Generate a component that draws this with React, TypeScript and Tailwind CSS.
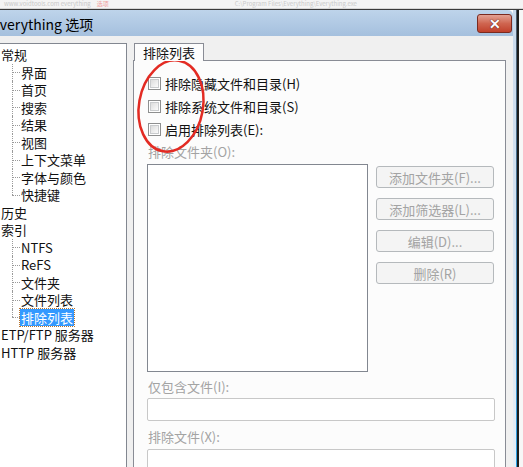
import React from "react";

type TreeItem = { label: string; level: 0 | 1; last?: boolean; selected?: boolean };

const treeItems: TreeItem[] = [
  { label: "常规", level: 0 },
  { label: "界面", level: 1 },
  { label: "首页", level: 1 },
  { label: "搜索", level: 1 },
  { label: "结果", level: 1 },
  { label: "视图", level: 1 },
  { label: "上下文菜单", level: 1 },
  { label: "字体与颜色", level: 1 },
  { label: "快捷键", level: 1, last: true },
  { label: "历史", level: 0 },
  { label: "索引", level: 0 },
  { label: "NTFS", level: 1 },
  { label: "ReFS", level: 1 },
  { label: "文件夹", level: 1 },
  { label: "文件列表", level: 1 },
  { label: "排除列表", level: 1, last: true, selected: true },
  { label: "ETP/FTP 服务器", level: 0 },
  { label: "HTTP 服务器", level: 0 },
];

const checks = ["排除隐藏文件和目录(H)", "排除系统文件和目录(S)", "启用排除列表(E):"];
const buttons = ["添加文件夹(F)...", "添加筛选器(L)...", "编辑(D)...", "删除(R)"];

function TreeRow({ item }: { item: TreeItem }) {
  if (item.level === 0) {
    return (
      <div className="flex h-[17.5px] shrink-0 items-center pl-[1px] text-[13px] leading-none text-[#111]">
        {item.label}
      </div>
    );
  }
  return (
    <div className="relative flex h-[17.5px] shrink-0 items-center pl-[20px] text-[13px] leading-none text-[#111]">
      <span
        className={`absolute left-[12px] top-0 border-l border-dotted border-[#9a9a9a] ${
          item.last ? "h-1/2" : "h-full"
        }`}
      />
      <span className="absolute left-[12px] top-1/2 w-[8px] border-t border-dotted border-[#9a9a9a]" />
      {item.selected ? (
        <span className="flex h-[17px] items-center bg-[#3399ff] px-[1px] text-white outline-1 outline-dotted outline-[#b8742e]">
          {item.label}
        </span>
      ) : (
        <span className="px-[1px]">{item.label}</span>
      )}
    </div>
  );
}

function CheckBox() {
  return (
    <span className="flex h-[13px] w-[13px] items-center justify-center border border-[#8e8f8f] bg-white">
      <span className="h-[9px] w-[9px] border border-[#c9cbcd] bg-gradient-to-br from-[#dcdcdc] to-[#fbfbfb]" />
    </span>
  );
}

export default function App() {
  return (
    <div className="relative flex h-[467px] w-[523px] flex-col overflow-hidden bg-white font-['Noto_Sans_CJK_SC','Noto_Sans',sans-serif]">
      {/* background window strip */}
      <div className="flex h-[9px] shrink-0 items-start gap-[6px] overflow-hidden border-b border-[#d6d6d6] bg-[#f4f4f4] pl-[4px]">
        <span className="text-[6px] leading-[7px] text-[#c8c8c8]">www.voidtools.com everything</span>
        <span className="text-[6px] leading-[7px] text-[#f0a0a0]">选项</span>
        <span className="ml-[120px] text-[6px] leading-[7px] text-[#cacaca]">C:\Program Files\Everything\Everything.exe</span>
      </div>
      <div className="h-[1px] shrink-0 bg-[#3a3a3a]" />

      <div className="flex min-h-0 flex-1">
        <div className="flex w-[513px] flex-col">
          {/* title bar */}
          <div className="flex h-[26px] shrink-0 items-center justify-between rounded-tr-[5px] bg-gradient-to-b from-[#bed4eb] to-[#a5c0de]">
            <span className="ml-[-8px] pt-[1px] text-[14px] leading-none text-black">everything 选项</span>
            <div className="mr-[1px] flex h-[19px] w-[35px] items-center justify-center rounded-[3px] border border-[#7b2a1f] bg-gradient-to-b from-[#e2a193] via-[#cf6550] to-[#c0402b]">
              <span className="text-[14px] font-bold leading-none text-white [text-shadow:0_0_1px_#5a1a10,0_0_1px_#5a1a10]">✕</span>
            </div>
          </div>

          {/* body */}
          <div className="flex min-h-0 flex-1 overflow-hidden bg-[#f0f0f0] pt-[7px]">
            {/* tree */}
            <div className="flex w-[127px] shrink-0 flex-col border-r border-t border-[#828790] bg-white pt-[2px]">
              {treeItems.map((it) => (
                <TreeRow key={it.label} item={it} />
              ))}
            </div>

            {/* tab control */}
            <div className="ml-[6px] flex flex-col">
              <div className="relative z-10 -mb-[1px] ml-[1px] flex h-[18px] w-[70px] shrink-0 items-center justify-center border-l border-r border-t border-[#898c95] bg-[#fcfcfc] text-[13px] leading-none text-[#111]">
                排除列表
              </div>
              <div className="flex w-[373px] flex-1 flex-col border-l border-r border-t border-[#898c95] bg-[#fcfcfc] pl-[13px] pt-[11px]">
                {checks.map((c) => (
                  <div key={c} className="flex h-[23px] shrink-0 items-center gap-[4px] pl-[1px] text-[13px] leading-none text-[#111]">
                    <CheckBox />
                    <span>{c}</span>
                  </div>
                ))}
                <div className="flex h-[20px] shrink-0 items-center pl-[1px] text-[13px] leading-none text-[#a3a3a3]">排除文件夹(O):</div>
                <div className="mt-[3px] flex shrink-0 gap-[8px]">
                  <div className="h-[208px] w-[221px] border border-[#828790] bg-white" />
                  <div className="flex flex-col gap-[10px] pt-[2px]">
                    {buttons.map((b) => (
                      <div
                        key={b}
                        className="flex h-[22px] w-[118px] items-center justify-center rounded-[3px] border border-[#b5b9bc] bg-[#f4f4f4] text-[13px] leading-none text-[#a3a3a3]"
                      >
                        {b}
                      </div>
                    ))}
                  </div>
                </div>
                <div className="mt-[3px] flex h-[22px] shrink-0 items-center pl-[1px] text-[13px] leading-none text-[#a3a3a3]">仅包含文件(I):</div>
                <div className="mt-[1px] h-[23px] w-[348px] shrink-0 rounded-[2px] border border-[#c8c8c8] bg-white" />
                <div className="mt-[4px] flex h-[22px] shrink-0 items-center pl-[1px] text-[13px] leading-none text-[#a3a3a3]">排除文件(X):</div>
                <div className="mt-[2px] h-[23px] w-[348px] shrink-0 rounded-[2px] border border-[#c8c8c8] bg-white" />
              </div>
            </div>
          </div>
        </div>

        {/* right window frame */}
        <div className="flex w-[10px]">
          <div className="w-[3px] bg-gradient-to-b from-[#c8d9ec] to-[#e6eef6]" />
          <div className="w-[1px] bg-gradient-to-b from-[#4a5a6a] to-[#2aa0e4]" />
          <div className="w-[2px] bg-[#1c1c1c]" />
          <div className="flex-1 bg-[#f7f7f7]" />
        </div>
      </div>

      {/* red annotation circle */}
      <svg className="pointer-events-none absolute left-0 top-0" width="523" height="467" viewBox="0 0 523 467">
        <ellipse
          cx="171"
          cy="106"
          rx="32"
          ry="46"
          transform="rotate(10 171 106)"
          fill="none"
          stroke="#e32b23"
          strokeWidth="2.5"
        />
      </svg>
    </div>
  );
}
